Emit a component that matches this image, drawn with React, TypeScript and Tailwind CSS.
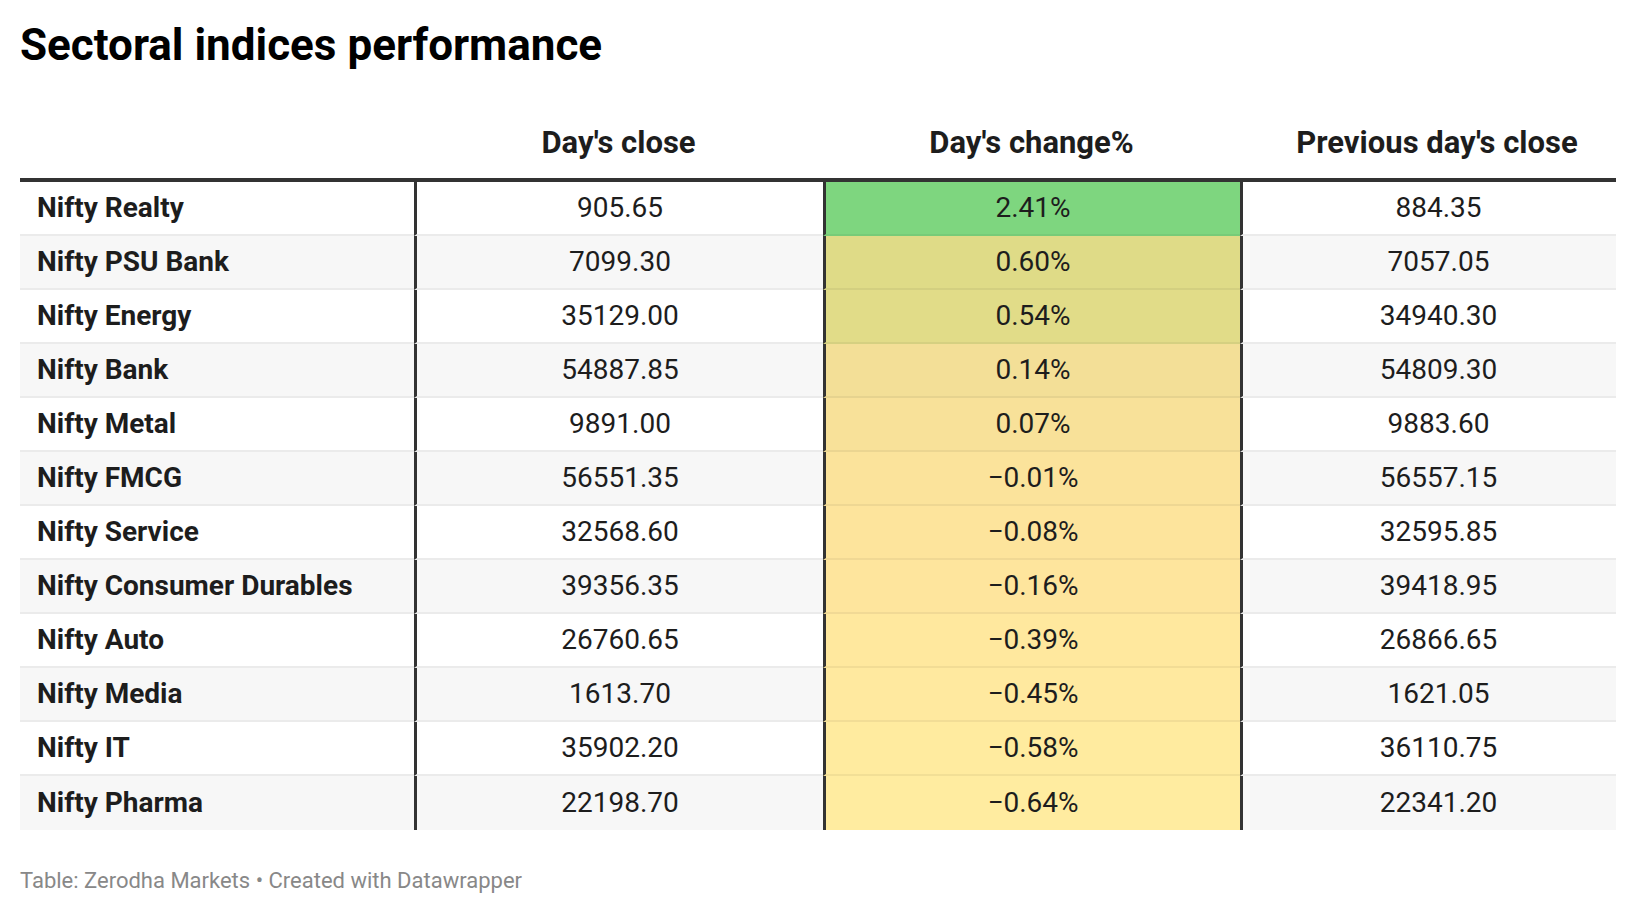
import React from 'react';

type Row = {
  name: string;
  close: string;
  change: string;
  prev: string;
  bg: string;
};

const rows: Row[] = [
  { name: 'Nifty Realty', close: '905.65', change: '2.41%', prev: '884.35', bg: 'bg-[#7ed67f]' },
  { name: 'Nifty PSU Bank', close: '7099.30', change: '0.60%', prev: '7057.05', bg: 'bg-[#dfdb87]' },
  { name: 'Nifty Energy', close: '35129.00', change: '0.54%', prev: '34940.30', bg: 'bg-[#e1dc88]' },
  { name: 'Nifty Bank', close: '54887.85', change: '0.14%', prev: '54809.30', bg: 'bg-[#f3df97]' },
  { name: 'Nifty Metal', close: '9891.00', change: '0.07%', prev: '9883.60', bg: 'bg-[#f8e199]' },
  { name: 'Nifty FMCG', close: '56551.35', change: '\u22120.01%', prev: '56557.15', bg: 'bg-[#fbe39b]' },
  { name: 'Nifty Service', close: '32568.60', change: '\u22120.08%', prev: '32595.85', bg: 'bg-[#fde49c]' },
  { name: 'Nifty Consumer Durables', close: '39356.35', change: '\u22120.16%', prev: '39418.95', bg: 'bg-[#fee59d]' },
  { name: 'Nifty Auto', close: '26760.65', change: '\u22120.39%', prev: '26866.65', bg: 'bg-[#ffe89e]' },
  { name: 'Nifty Media', close: '1613.70', change: '\u22120.45%', prev: '1621.05', bg: 'bg-[#ffe99f]' },
  { name: 'Nifty IT', close: '35902.20', change: '\u22120.58%', prev: '36110.75', bg: 'bg-[#ffeb9f]' },
  { name: 'Nifty Pharma', close: '22198.70', change: '\u22120.64%', prev: '22341.20', bg: 'bg-[#ffeca0]' },
];

const cols = 'grid grid-cols-[394px_409px_417px_1fr]';

export default function App() {
  return (
    <div
      className="min-h-screen w-[1636px] bg-white px-5 text-[#1d1d1d]"
      style={{ fontFamily: 'Roboto, "Liberation Sans", sans-serif' }}
    >
      <h1 className="pt-[23px] text-[44px] font-bold leading-none text-black">
        Sectoral indices performance
      </h1>

      <div className="mt-[35px]">
        {/* header */}
        <div className={`${cols} h-[80px] items-end border-b-4 border-[#333] pb-[20px] text-[31px] font-bold leading-none`}>
          <div />
          <div className="text-center">Day's close</div>
          <div className="text-center">Day's change%</div>
          <div className="pl-[18px] text-center">Previous day's close</div>
        </div>

        {rows.map((r, i) => {
          const last = i === rows.length - 1;
          return (
            <div
              key={r.name}
              className={`${cols} h-[54px] text-[28px] leading-none ${
                i % 2 === 1 ? 'bg-[#f7f7f7]' : 'bg-white'
              }`}
            >
              <div
                className={`flex items-center pl-[17px] font-bold ${
                  last ? '' : 'border-b-2 border-[#ebebeb]'
                }`}
              >
                {r.name}
              </div>
              <div
                className={`flex items-center justify-center border-l-[3px] border-[#333] ${
                  last ? '' : 'border-b-2 border-b-[#ebebeb]'
                }`}
              >
                {r.close}
              </div>
              <div
                className={`flex items-center justify-center border-l-[3px] border-[#333] ${r.bg} ${
                  last ? '' : 'border-b-2 border-b-black/5'
                }`}
              >
                {r.change}
              </div>
              <div
                className={`flex items-center justify-center border-l-[3px] border-[#333] pl-[18px] ${
                  last ? '' : 'border-b-2 border-b-[#ebebeb]'
                }`}
              >
                {r.prev}
              </div>
            </div>
          );
        })}
      </div>

      <p className="mt-[40px] text-[22px] leading-none text-[#888]">
        Table: Zerodha Markets • Created with Datawrapper
      </p>
    </div>
  );
}
